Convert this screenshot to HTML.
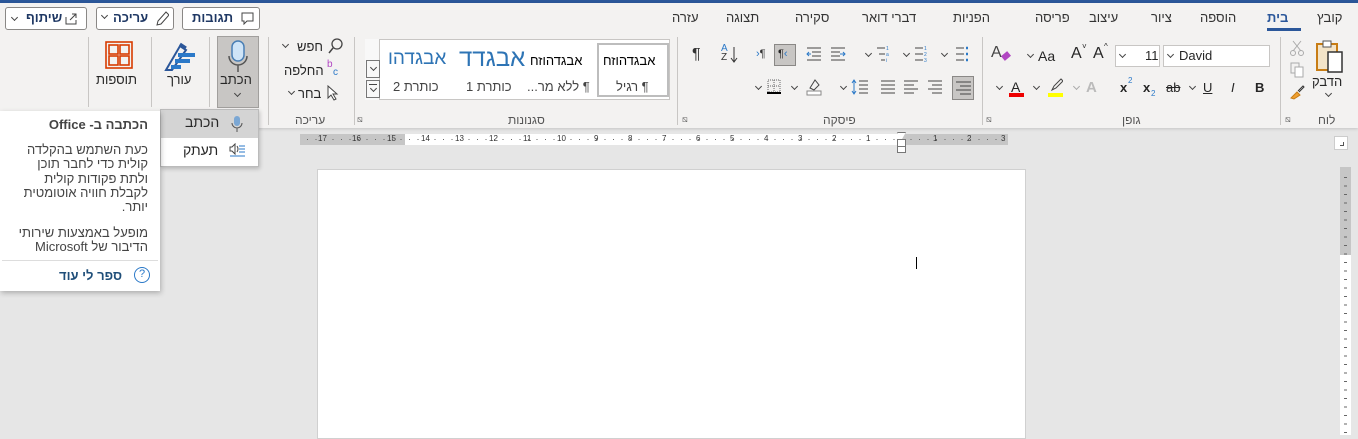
<!DOCTYPE html>
<html><head><meta charset="utf-8"><style>
*{margin:0;padding:0;box-sizing:border-box}
body{width:1358px;height:433px;overflow:hidden;background:#e6e6e6;font-family:"Liberation Sans","Noto Sans CJK SC",sans-serif;color:#262626;position:relative;font-size:12px}
.a{position:absolute;white-space:nowrap}
.sep{position:absolute;width:1px;background:#c8c6c4}
.cv{position:absolute;width:5px;height:5px;border-right:1px solid #444;border-bottom:1px solid #444;transform:rotate(45deg)}
.rn{position:absolute;top:134px;font-size:8px;color:#333}
</style></head><body>
<div class="a" style="left:0;top:0;width:1358px;height:3px;background:#2b579a"></div>
<div class="a" style="left:0;top:3px;width:1358px;height:125px;background:#f3f2f1;box-shadow:0 1px 3px rgba(0,0,0,.15)"></div>
<!-- tabs -->
<div class="a" style="top:10px;left:0;width:1358px;font-size:13px;color:#333">
<span class="a" style="left:1317px">קובץ</span>
<span class="a" style="left:1267px;font-weight:bold;color:#2b579a">בית</span>
<span class="a" style="left:1200px">הוספה</span>
<span class="a" style="left:1151px">ציור</span>
<span class="a" style="left:1089px">עיצוב</span>
<span class="a" style="left:1035px">פריסה</span>
<span class="a" style="left:953px">הפניות</span>
<span class="a" style="left:862px">דברי דואר</span>
<span class="a" style="left:795px">סקירה</span>
<span class="a" style="left:726px">תצוגה</span>
<span class="a" style="left:672px">עזרה</span>
</div>
<div class="a" style="left:1267px;top:28px;width:34px;height:3px;background:#2b579a"></div>
<!-- top buttons -->
<div class="a" style="left:5px;top:7px;width:82px;height:23px;border:1px solid #8a8886;border-radius:3px;background:#fff"></div>
<div class="cv" style="left:12px;top:15px"></div>
<div class="a" style="left:26px;top:10px;font-weight:bold;font-size:13px;color:#1f3864">שיתוף</div>
<svg class="a" style="left:65px;top:12px" width="13" height="13"><path d="M1 5v7h10V8M5 8l6-6M7 2h4v4" fill="none" stroke="#444"/></svg>
<div class="a" style="left:96px;top:7px;width:78px;height:23px;border:1px solid #8a8886;border-radius:3px;background:#fff"></div>
<div class="cv" style="left:102px;top:13px"></div>
<div class="a" style="left:113px;top:10px;font-weight:bold;font-size:13px;color:#1f3864">עריכה</div>
<svg class="a" style="left:155px;top:10px" width="14" height="16"><path d="M2 15l1-4L11 2l3 3-8 9z" fill="none" stroke="#444"/></svg>
<div class="a" style="left:182px;top:7px;width:78px;height:23px;border:1px solid #8a8886;border-radius:3px;background:#fff"></div>
<div class="a" style="left:192px;top:10px;font-weight:bold;font-size:13px;color:#1f3864">תגובות</div>
<svg class="a" style="left:241px;top:12px" width="13" height="13"><path d="M1 1h11v8H6l-3 3V9H1z" fill="none" stroke="#444"/></svg>
<!-- separators -->
<div class="sep" style="left:88px;top:37px;height:70px"></div>
<div class="sep" style="left:151px;top:37px;height:70px"></div>
<div class="sep" style="left:209px;top:37px;height:70px"></div>
<div class="sep" style="left:268px;top:37px;height:88px"></div>
<div class="sep" style="left:354px;top:37px;height:88px"></div>
<div class="sep" style="left:677px;top:37px;height:88px"></div>
<div class="sep" style="left:982px;top:37px;height:88px"></div>
<div class="sep" style="left:1280px;top:37px;height:88px"></div>
<!-- add-ins -->
<svg class="a" style="left:105px;top:41px" width="28" height="28"><g fill="none" stroke="#d83b01" stroke-width="1.6"><rect x="1" y="1" width="26" height="26"/><rect x="4" y="4" width="9" height="9"/><rect x="15" y="4" width="9" height="9"/><rect x="4" y="15" width="9" height="9"/><rect x="15" y="15" width="9" height="9"/></g></svg>
<div class="a" style="left:96px;top:72px;font-size:13px">תוספות</div>
<!-- editor -->
<svg class="a" style="left:162px;top:40px" width="36" height="32"><path d="M4 30 L18 6 L24 10 L10 30Z" fill="none" stroke="#2b579a" stroke-width="2"/><path d="M18 4l6 4" stroke="#2b579a" stroke-width="3"/><path d="M16 15h17M13 21h15M9 27h10" stroke="#2b79c8" stroke-width="4"/></svg>
<div class="a" style="left:167px;top:72px;font-size:13px">עורך</div>
<!-- dictate -->
<div class="a" style="left:217px;top:36px;width:42px;height:72px;background:#c8c6c4;border:1px solid #a19f9d"></div>
<svg class="a" style="left:226px;top:40px" width="24" height="34"><rect x="6" y="1" width="12" height="20" rx="6" fill="#cfe4f7" stroke="#4a7fb5" stroke-width="1.5"/><path d="M3 16a9 9 0 0 0 18 0M12 25v7" fill="none" stroke="#555" stroke-width="1.5"/></svg>
<div class="a" style="left:220px;top:72px;font-size:13px">הכתב</div>
<div class="cv" style="left:235px;top:91px"></div>
<!-- editing -->
<div class="cv" style="left:283px;top:42px"></div>
<div class="a" style="left:297px;top:39px;font-size:13px">חפש</div>
<svg class="a" style="left:328px;top:38px" width="15" height="16"><circle cx="9" cy="6" r="5" fill="none" stroke="#444" stroke-width="1.3"/><path d="M5 10l-4 5" stroke="#444" stroke-width="1.5"/></svg>
<div class="a" style="left:284px;top:63px;font-size:13px">החלפה</div>
<div class="a" style="left:327px;top:59px;font-size:10px;color:#b146c2">b</div><div class="a" style="left:333px;top:67px;font-size:10px;color:#2b79c8">c</div>
<div class="cv" style="left:289px;top:89px"></div>
<div class="a" style="left:298px;top:86px;font-size:13px">בחר</div>
<svg class="a" style="left:327px;top:85px" width="12" height="16"><path d="M1 1v12l3-3 3 5 2-1-3-5h4z" fill="#fff" stroke="#444"/></svg>
<div class="a" style="left:295px;top:113px;color:#555">עריכה</div>
<div class="a" style="left:357px;top:114px;font-size:9px;color:#666">⧅</div>
<!-- styles gallery -->
<div class="a" style="left:365px;top:39px;width:305px;height:61px;background:#fff;border:1px solid #c8c6c4"></div>
<div class="a" style="left:365px;top:39px;width:15px;height:61px;border-right:1px solid #c8c6c4;background:#f8f8f8"></div>
<div class="a" style="left:366px;top:60px;width:14px;height:18px;border:1px solid #777"></div><div class="cv" style="left:371px;top:65px"></div>
<div class="a" style="left:366px;top:80px;width:14px;height:18px;border:1px solid #777"></div><div class="a" style="left:369px;top:84px;width:8px;height:1px;background:#444"></div><div class="cv" style="left:371px;top:86px"></div>
<div class="a" style="left:597px;top:43px;width:72px;height:54px;border:2px solid #bdbdbd"></div>
<div class="a" style="left:603px;top:53px;font-size:13px;color:#000">אבגדהוזח</div>
<div class="a" style="left:616px;top:79px;font-size:13px;color:#444;direction:rtl">¶ רגיל</div>
<div class="a" style="left:530px;top:53px;font-size:13px;color:#000">אבגדהוזח</div>
<div class="a" style="left:527px;top:79px;font-size:13px;color:#444;direction:rtl">¶ ללא מר...</div>
<div class="a" style="left:459px;top:45px;font-size:24px;color:#2e74b5">אבגדד</div>
<div class="a" style="left:466px;top:79px;font-size:13px;color:#444;direction:rtl">כותרת 1</div>
<div class="a" style="left:388px;top:48px;font-size:19px;color:#2e74b5">אבגדהו</div>
<div class="a" style="left:393px;top:79px;font-size:13px;color:#444;direction:rtl">כותרת 2</div>
<div class="a" style="left:508px;top:113px;color:#555">סגנונות</div>
<div class="a" style="left:682px;top:114px;font-size:9px;color:#666">⧅</div>
<!-- paragraph row1 -->
<div class="a" style="left:692px;top:46px;font-size:16px;color:#333">¶</div>
<div class="a" style="left:721px;top:44px;font-size:10px;color:#2b79c8;line-height:9px">A<br><span style="color:#333">Z</span></div>
<svg class="a" style="left:730px;top:46px" width="9" height="18"><path d="M4 1v15M1 12l3 4 3-4" fill="none" stroke="#333"/></svg>
<div class="a" style="left:756px;top:48px;font-size:11px;color:#333"><span style="color:#2b79c8">›</span>¶</div>
<div class="a" style="left:774px;top:44px;width:22px;height:22px;background:#c8c6c4;border:1px solid #8a8886;font-size:11px;padding:3px 3px">¶<span style="color:#2b79c8">‹</span></div>
<svg class="a" style="left:806px;top:46px" width="48" height="16"><g stroke="#444"><path d="M1 2h14M6 6h9M6 10h9M1 14h14M25 2h14M25 6h9M25 10h9M25 14h14"/></g><path d="M5 8H1M3 6l-2 2 2 2M34 8h5M37 6l2 2-2 2" stroke="#2b79c8" fill="none"/></svg>
<div class="cv" style="left:866px;top:51px"></div>
<svg class="a" style="left:876px;top:45px" width="14" height="18"><path d="M1 3h8M3 9h6M5 15h4" stroke="#444"/><text x="10" y="5" font-size="5" fill="#2b79c8">1</text><text x="10" y="11" font-size="5" fill="#2b79c8">a</text><text x="10" y="17" font-size="5" fill="#2b79c8">i</text></svg>
<div class="cv" style="left:904px;top:51px"></div>
<svg class="a" style="left:914px;top:45px" width="14" height="18"><path d="M1 3h8M1 9h8M1 15h8" stroke="#444"/><text x="10" y="5" font-size="5" fill="#2b79c8">1</text><text x="10" y="11" font-size="5" fill="#2b79c8">2</text><text x="10" y="17" font-size="5" fill="#2b79c8">3</text></svg>
<div class="cv" style="left:942px;top:51px"></div>
<svg class="a" style="left:955px;top:45px" width="14" height="18"><path d="M1 3h8M1 9h8M1 15h8" stroke="#444"/><path d="M11 3h2M11 9h2M11 15h2" stroke="#2b79c8" stroke-width="2.5"/></svg>
<!-- paragraph row2 -->
<div class="cv" style="left:756px;top:84px"></div>
<svg class="a" style="left:767px;top:79px" width="14" height="16"><rect x="1" y="1" width="12" height="12" fill="none" stroke="#666" stroke-dasharray="1 1"/><path d="M7 1v12M1 7h12" stroke="#666" stroke-dasharray="1 1"/><path d="M0 14h14" stroke="#000" stroke-width="2"/></svg>
<div class="cv" style="left:792px;top:84px"></div>
<svg class="a" style="left:806px;top:78px" width="16" height="18"><path d="M4 10l5-8 4 5-5 5z" fill="none" stroke="#444"/><rect x="1" y="13" width="14" height="4" fill="#fff" stroke="#888"/></svg>
<div class="cv" style="left:841px;top:84px"></div>
<svg class="a" style="left:851px;top:78px" width="18" height="18"><path d="M3 2v14M1 5l2-3 2 3M1 13l2 3 2-3" fill="none" stroke="#2b79c8"/><path d="M8 3h9M8 7h9M8 11h9M8 15h9" stroke="#444"/></svg>
<svg class="a" style="left:880px;top:80px" width="70" height="14"><g stroke="#444"><path d="M1 1h14M1 5h14M1 9h14M1 13h14M24 1h14M24 5h10M24 9h14M24 13h10M48 1h14M52 5h10M48 9h14M52 13h10"/></g></svg>
<div class="a" style="left:952px;top:76px;width:22px;height:24px;background:#c8c6c4;border:1px solid #8a8886"></div>
<svg class="a" style="left:956px;top:81px" width="15" height="14"><path d="M0 1h15M4 5h11M0 9h15M4 13h11" stroke="#444"/></svg>
<div class="a" style="left:823px;top:113px;color:#555">פיסקה</div>
<div class="a" style="left:986px;top:114px;font-size:9px;color:#666">⧅</div>
<!-- font row1 -->
<div class="a" style="left:991px;top:44px;font-size:16px;color:#444">A</div><div class="a" style="left:1002px;top:53px;width:8px;height:6px;background:#b146c2;transform:rotate(-40deg)"></div>
<div class="cv" style="left:1028px;top:52px"></div>
<div class="a" style="left:1038px;top:48px;font-size:14px">Aa</div>
<div class="a" style="left:1071px;top:45px;font-size:16px">A</div><div class="a" style="left:1082px;top:42px;font-size:8px">˅</div>
<div class="a" style="left:1093px;top:45px;font-size:16px">A</div><div class="a" style="left:1104px;top:42px;font-size:8px">^</div>
<div class="a" style="left:1115px;top:45px;width:45px;height:22px;border:1px solid #c8c6c4;background:#fff"></div>
<div class="cv" style="left:1120px;top:52px"></div><div class="a" style="left:1145px;top:48px;font-size:13px">11</div>
<div class="a" style="left:1163px;top:45px;width:107px;height:22px;border:1px solid #c8c6c4;background:#fff"></div>
<div class="cv" style="left:1168px;top:52px"></div><div class="a" style="left:1179px;top:48px;font-size:13px">David</div>
<!-- font row2 -->
<div class="cv" style="left:997px;top:84px"></div>
<div class="a" style="left:1011px;top:79px;font-size:14px">A</div><div class="a" style="left:1009px;top:93px;width:15px;height:4px;background:#e00"></div>
<div class="cv" style="left:1034px;top:84px"></div>
<svg class="a" style="left:1049px;top:78px" width="14" height="14"><path d="M3 12l2-4 7-7 2 2-7 7z" fill="none" stroke="#444"/></svg><div class="a" style="left:1048px;top:93px;width:15px;height:4px;background:#ff0"></div>
<div class="cv" style="left:1074px;top:84px;border-color:#aaa"></div>
<div class="a" style="left:1086px;top:79px;font-size:15px;color:#bbb;font-weight:bold">A</div>
<div class="a" style="left:1120px;top:80px;font-size:13px;font-weight:bold">x</div><div class="a" style="left:1128px;top:76px;font-size:8px;color:#2b79c8">2</div>
<div class="a" style="left:1143px;top:80px;font-size:13px;font-weight:bold">x</div><div class="a" style="left:1151px;top:89px;font-size:8px;color:#2b79c8">2</div>
<div class="a" style="left:1166px;top:80px;font-size:13px"><s>ab</s></div>
<div class="cv" style="left:1190px;top:84px"></div>
<div class="a" style="left:1203px;top:80px;font-size:13px;text-decoration:underline">U</div>
<div class="a" style="left:1231px;top:80px;font-size:13px;font-style:italic">I</div>
<div class="a" style="left:1255px;top:80px;font-size:13px;font-weight:bold">B</div>
<div class="a" style="left:1122px;top:113px;color:#555">גופן</div>
<div class="a" style="left:1285px;top:114px;font-size:9px;color:#666">⧅</div>
<!-- clipboard -->
<svg class="a" style="left:1314px;top:38px" width="32" height="36"><rect x="3" y="6" width="20" height="26" fill="#f3e4c8" stroke="#c87d15" stroke-width="2"/><rect x="9" y="3" width="8" height="6" fill="#fff" stroke="#555"/><rect x="14" y="14" width="14" height="20" fill="#fff" stroke="#333" stroke-width="1.5"/></svg>
<div class="a" style="left:1312px;top:74px;font-size:13px">הדבק</div>
<div class="cv" style="left:1326px;top:91px"></div>
<svg class="a" style="left:1290px;top:40px" width="14" height="16"><path d="M3 1l8 10M11 1L3 11" stroke="#aaa"/><circle cx="3" cy="13" r="2.5" fill="none" stroke="#aaa"/><circle cx="11" cy="13" r="2.5" fill="none" stroke="#aaa"/></svg>
<svg class="a" style="left:1290px;top:62px" width="14" height="16"><rect x="1" y="1" width="8" height="10" fill="none" stroke="#aaa"/><rect x="5" y="5" width="8" height="10" fill="#fff" stroke="#aaa"/></svg>
<svg class="a" style="left:1289px;top:84px" width="16" height="16"><path d="M2 14l6-6 3 3-6 4z" fill="#f0a030" stroke="#c87d15"/><path d="M9 7l5-5 1 1-5 5" fill="none" stroke="#333"/></svg>
<div class="a" style="left:1318px;top:113px;color:#555">לוח</div>
<!-- ruler -->
<div class="a" style="left:300px;top:134px;width:708px;height:11px;background:#c6c6c6"></div>
<div class="a" style="left:405px;top:134px;width:496px;height:11px;background:#fff"></div>
<span class="rn" style="left:318px">17</span><span class="rn" style="left:352px">16</span><span class="rn" style="left:387px">15</span><span class="rn" style="left:421px">14</span><span class="rn" style="left:455px">13</span><span class="rn" style="left:489px">12</span><span class="rn" style="left:523px">11</span><span class="rn" style="left:557px">10</span><span class="rn" style="left:594px">9</span><span class="rn" style="left:628px">8</span><span class="rn" style="left:662px">7</span><span class="rn" style="left:696px">6</span><span class="rn" style="left:730px">5</span><span class="rn" style="left:764px">4</span><span class="rn" style="left:798px">3</span><span class="rn" style="left:832px">2</span><span class="rn" style="left:866px">1</span><span class="rn" style="left:933px">1</span><span class="rn" style="left:967px">2</span><span class="rn" style="left:1001px">3</span>
<div class="a" style="left:300px;top:139px;width:708px;height:1px;background:repeating-linear-gradient(90deg,transparent 0 7px,#666 7px 8px,transparent 8px 8.5px)"></div>
<div class="a" style="left:897px;top:132px;width:9px;height:8px;border:1px solid #777;background:#fff;clip-path:polygon(0 0,100% 0,50% 100%)"></div>
<div class="a" style="left:897px;top:139px;width:9px;height:8px;border:1px solid #777;background:#fff"></div>
<div class="a" style="left:897px;top:146px;width:9px;height:7px;border:1px solid #777;background:#fff"></div>
<div class="a" style="left:1334px;top:136px;width:14px;height:14px;background:#fff;border:1px solid #ccc"></div>
<div class="a" style="left:1340px;top:142px;width:4px;height:4px;border-right:1px solid #555;border-bottom:1px solid #555"></div>
<!-- page -->
<div class="a" style="left:317px;top:169px;width:709px;height:270px;background:#fff;border:1px solid #d0d0d0"></div>
<div class="a" style="left:916px;top:257px;width:1px;height:12px;background:#000"></div>
<!-- vertical ruler -->
<div class="a" style="left:1340px;top:167px;width:11px;height:88px;background:#c6c6c6"></div>
<div class="a" style="left:1340px;top:255px;width:11px;height:180px;background:#fff"></div>
<div class="a" style="left:1344px;top:170px;width:3px;height:265px;background:repeating-linear-gradient(180deg,transparent 0 7px,#666 7px 8px,transparent 8px 8.5px)"></div>
<!-- menu -->
<div class="a" style="left:160px;top:109px;width:99px;height:58px;background:#fff;border:1px solid #bbb;box-shadow:1px 2px 4px rgba(0,0,0,.2)"></div>
<div class="a" style="left:161px;top:110px;width:97px;height:28px;background:#d4d4d4"></div>
<div class="a" style="left:185px;top:114px;font-size:14px">הכתב</div>
<svg class="a" style="left:231px;top:115px" width="12" height="18"><rect x="3" y="1" width="6" height="10" rx="3" fill="#7ba7d4"/><path d="M1 8a5 5 0 0 0 10 0M6 13v4" fill="none" stroke="#555"/></svg>
<div class="a" style="left:183px;top:142px;font-size:14px">תעתק</div>
<svg class="a" style="left:229px;top:143px" width="17" height="14"><path d="M1 4h2l3-3v10L3 8H1z" fill="none" stroke="#444"/><path d="M8 3q2 3 0 6" fill="none" stroke="#444"/><path d="M10 3h6M10 6h6M10 9h6M1 13h15" stroke="#2b79c8"/></svg>
<!-- tooltip -->
<div class="a" style="left:0;top:111px;width:160px;height:180px;background:#fff;box-shadow:1px 2px 5px rgba(0,0,0,.25)"></div>
<div class="a" style="right:1210px;top:117px;font-weight:bold;font-size:13px;color:#444;direction:rtl">הכתבה ב- Office</div>
<div class="a" style="right:1210px;top:143px;font-size:13px;line-height:14.3px;color:#444;text-align:right;direction:rtl">כעת השתמש בהקלדה<br>קולית כדי לחבר תוכן<br>ולתת פקודות קולית<br>לקבלת חוויה אוטומטית<br>יותר.</div>
<div class="a" style="right:1210px;top:226px;font-size:13px;line-height:14.3px;color:#444;text-align:right;direction:rtl">מופעל באמצעות שירותי<br>הדיבור של Microsoft</div>
<div class="a" style="left:2px;top:260px;width:156px;height:1px;background:#ddd"></div>
<div class="a" style="left:59px;top:268px;font-weight:bold;font-size:13px;color:#1f4e79">ספר לי עוד</div>
<div class="a" style="left:134px;top:267px;width:16px;height:16px;border:1.5px solid #2b79c8;border-radius:50%;font-size:11px;color:#2b79c8;text-align:center;line-height:13px">?</div>
</body></html>
